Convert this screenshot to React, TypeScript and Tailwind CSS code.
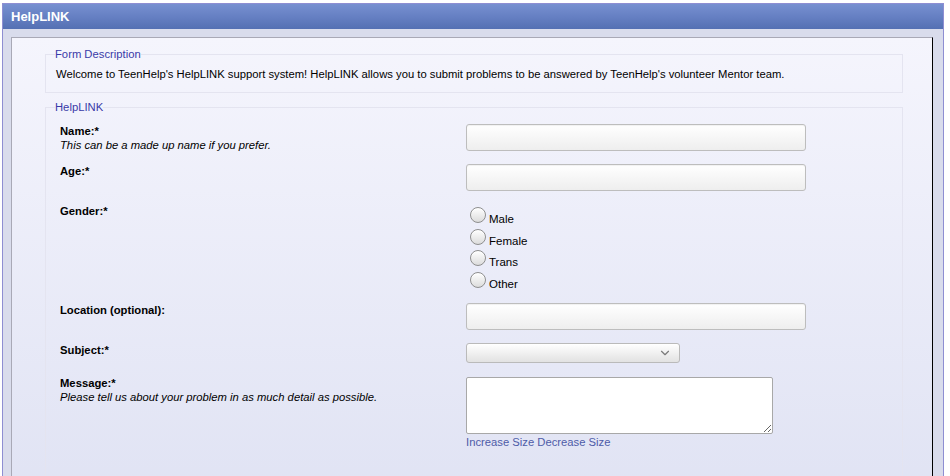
import { ChevronDown } from "lucide-react";

const genders = ["Male", "Female", "Trans", "Other"];

const inputCls =
  "block w-[340px] h-[27px] rounded-[3px] border border-[#bdbdbd] bg-linear-to-b from-white to-[#eeeeee] shadow-[inset_0_1px_1px_rgba(0,0,0,0.06)] px-2 text-[11px] outline-none";

export default function App() {
  return (
    <div className="min-h-screen bg-white pt-[3px] pl-[2px] font-['Liberation_Sans',Arial,sans-serif] text-[11.25px] text-black">
      <div className="w-[942px] border border-[#8e8ed2] bg-[#d9dcec]">
        {/* Title bar */}
        <div className="h-[25px] bg-linear-to-b from-[#7790d0] via-[#6680c3] to-[#5470b3] pl-[8px] flex items-center">
          <span className="text-[13px] font-bold text-white">HelpLINK</span>
        </div>

        <div className="pl-[8px] pr-[10px] pt-[8px]">
          {/* Inner panel */}
          <div className="border-t border-l border-r border-[#a9a9b6] border-r-black bg-linear-to-b from-[#f5f5fd] to-[#dfe2f3] pl-[33px] pr-[29px] pt-[9px] pb-[40px]">
            {/* Form description */}
            <fieldset className="border border-[#e4e4f0] pl-[10px] pr-[10px] pb-[11px]">
              <legend className="text-[#3a3aa8] leading-[14px] -ml-[1px]">Form Description</legend>
              <p className="pt-[6px] leading-[14px]">
                Welcome to TeenHelp's HelpLINK support system! HelpLINK allows you to submit problems to be answered by
                TeenHelp's volunteer Mentor team.
              </p>
            </fieldset>

            {/* HelpLINK form */}
            <fieldset className="mt-[7px] border border-[#e4e4f0] pl-[14px] pr-[10px] pt-[10px] pb-[30px]">
              <legend className="text-[#3a3aa8] leading-[14px] -ml-[5px]">HelpLINK</legend>

              <div className="flex h-[27px] mb-[13px]">
                <div className="w-[406px] leading-[14px]">
                  <div className="font-bold">Name:*</div>
                  <div className="italic">This can be a made up name if you prefer.</div>
                </div>
                <input className={inputCls} />
              </div>

              <div className="flex h-[27px] mb-[13px]">
                <div className="w-[406px] leading-[14px] font-bold">Age:*</div>
                <input className={inputCls} />
              </div>

              <div className="flex h-[86px] mb-[13px]">
                <div className="w-[406px] leading-[14px] font-bold">Gender:*</div>
                <div className="pt-[3px] pl-[4px]">
                  {genders.map((g) => (
                    <label key={g} className="flex items-start h-[21.6px]">
                      <input
                        type="radio"
                        name="gender"
                        className="appearance-none m-0 w-[16px] h-[16px] rounded-full border border-[#8e8e8e] bg-linear-to-b from-white to-[#dcdcdc] shadow-[inset_0_1px_0_white]"
                      />
                      <span className="ml-[3px] mt-[5px] leading-[14px] text-[11.5px]">{g}</span>
                    </label>
                  ))}
                </div>
              </div>

              <div className="flex h-[27px] mb-[13px]">
                <div className="w-[406px] leading-[14px] font-bold">Location (optional):</div>
                <input className={inputCls} />
              </div>

              <div className="flex h-[20px] mb-[14px]">
                <div className="w-[406px] leading-[14px] font-bold">Subject:*</div>
                <div className="relative w-[214px] h-[20px] rounded-[3px] border border-[#bababa] bg-linear-to-b from-white to-[#e2e2e2]">
                  <ChevronDown className="absolute right-[7px] top-[2px] w-[14px] h-[14px] text-[#7a7a7a]" strokeWidth={2} />
                </div>
              </div>

              <div className="flex">
                <div className="w-[406px] leading-[14px] -mt-[1px]">
                  <div className="font-bold">Message:*</div>
                  <div className="italic">Please tell us about your problem in as much detail as possible.</div>
                </div>
                <div>
                  <textarea className="block w-[307px] h-[57px] border border-[#a8a8a8] rounded-[2px] bg-white outline-none" />
                  <div className="leading-[14px] text-[#4d5ba8] mt-[1px]">
                    <span>Increase Size</span> <span>Decrease Size</span>
                  </div>
                </div>
              </div>
            </fieldset>
          </div>
        </div>
      </div>
    </div>
  );
}
